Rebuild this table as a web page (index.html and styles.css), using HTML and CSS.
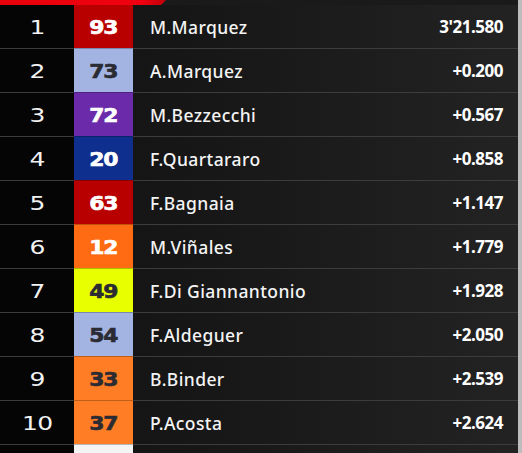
FILE: index.html
```html
<!DOCTYPE html>
<html>
<head>
<meta charset="utf-8">
<link rel="stylesheet" href="styles.css">
</head>
<body>
<div class="board">
  <div class="topbar"><div class="red"></div></div>
  <div class="list">
    <div class="row"><div class="pos"><span>1</span></div><div class="num c-red light"><span>93</span></div><div class="name">M.Marquez</div><div class="time">3'21.580</div></div>
    <div class="row"><div class="pos"><span>2</span></div><div class="num c-lblue"><span>73</span></div><div class="name">A.Marquez</div><div class="time">+0.200</div></div>
    <div class="row"><div class="pos"><span>3</span></div><div class="num c-purple light"><span>72</span></div><div class="name">M.Bezzecchi</div><div class="time">+0.567</div></div>
    <div class="row"><div class="pos"><span>4</span></div><div class="num c-navy light"><span>20</span></div><div class="name">F.Quartararo</div><div class="time">+0.858</div></div>
    <div class="row"><div class="pos"><span>5</span></div><div class="num c-red light"><span>63</span></div><div class="name">F.Bagnaia</div><div class="time">+1.147</div></div>
    <div class="row"><div class="pos"><span>6</span></div><div class="num c-orange light"><span>12</span></div><div class="name">M.Viñales</div><div class="time">+1.779</div></div>
    <div class="row"><div class="pos"><span>7</span></div><div class="num c-yellow"><span>49</span></div><div class="name">F.Di Giannantonio</div><div class="time">+1.928</div></div>
    <div class="row"><div class="pos"><span>8</span></div><div class="num c-lblue"><span>54</span></div><div class="name">F.Aldeguer</div><div class="time">+2.050</div></div>
    <div class="row"><div class="pos"><span>9</span></div><div class="num c-orange2"><span>33</span></div><div class="name">B.Binder</div><div class="time">+2.539</div></div>
    <div class="row"><div class="pos"><span>10</span></div><div class="num c-orange2"><span>37</span></div><div class="name">P.Acosta</div><div class="time">+2.624</div></div>
    <div class="row partial"><div class="pos"></div><div class="num c-white"></div><div class="name"></div><div class="time"></div></div>
  </div>
  <div class="edge"></div>
</div>
</body>
</html>
```

FILE: styles.css
```css
html, body {
  margin: 0;
  padding: 0;
  background: #0a0a0a;
  overflow: hidden;
}
.board {
  position: relative;
  width: 522px;
  height: 453px;
  overflow: hidden;
  background: #111;
}
.topbar {
  height: 5px;
  background: #1a1a1a;
}
.topbar .red {
  width: 166px;
  height: 5px;
  background: linear-gradient(90deg, #e8000a 0%, #f00010 85%, #c0000a 100%);
  clip-path: polygon(0 0, 100% 0, 97% 100%, 0 100%);
}
.list {
  display: flex;
  flex-direction: column;
}
.row {
  display: grid;
  grid-template-columns: 74px 59px 1fr 140px;
  height: 44px;
  align-items: stretch;
  background: linear-gradient(90deg, #121212 0%, #171717 40%, #232323 100%);
  border-top: 1px solid #3c3c3c;
  box-sizing: border-box;
}
.row:first-child { border-top: none; height: 43px; }
.pos {
  background: #050505;
  color: #f2f2f2;
  font-family: "DejaVu Sans", sans-serif;
  font-weight: 400;
  font-size: 20px;
  display: flex;
  align-items: center;
  justify-content: center;
}
.pos span {
  display: inline-block;
  transform: scaleX(1.25);
  letter-spacing: -0.5px;
}
.num {
  margin-top: -1px;
  border-top: 1px solid rgba(0,0,0,0.25);
  display: flex;
  align-items: center;
  justify-content: center;
  font-family: "DejaVu Sans", sans-serif;
  font-weight: 800;
  font-size: 19px;
  color: #2b2b33;
}
.num span {
  display: inline-block;
  transform: scaleX(1.15);
  letter-spacing: -1px;
  -webkit-text-stroke: 0.6px currentColor;
}
.row:first-child .num { margin-top: 0; border-top: none; }
.num.light { color: #ffffff; }
.c-red { background: #b80000; }
.c-lblue { background: #a4b4e2; }
.c-purple { background: #6b2aaa; }
.c-navy { background: #0e2f8e; }
.c-orange { background: #ff6b12; }
.c-orange2 { background: #ff7d24; }
.c-yellow { background: #e8ff00; }
.c-white { background: #f4f4f4; }
.name {
  color: #f4f4f4;
  font-family: "Noto Sans", sans-serif;
  font-weight: 500;
  font-size: 17.5px;
  letter-spacing: 0.4px;
  display: flex;
  align-items: center;
  padding-left: 17px;
  white-space: nowrap;
}
.time {
  color: #ffffff;
  font-family: "Noto Sans", sans-serif;
  font-weight: 700;
  font-size: 17px;
  letter-spacing: -0.5px;
  display: flex;
  align-items: center;
  justify-content: flex-end;
  padding-right: 19px;
}
.edge {
  position: absolute;
  top: 0;
  right: 0;
  width: 4px;
  height: 453px;
  background: #bdbdbd;
}
```
